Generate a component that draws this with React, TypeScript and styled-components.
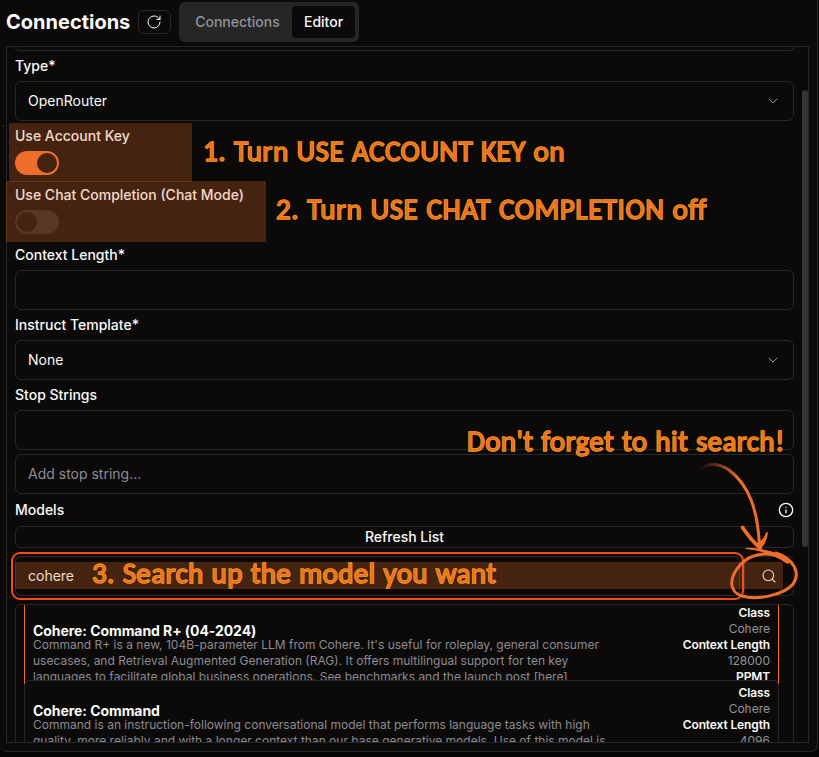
import React from 'react';
import styled, { createGlobalStyle } from 'styled-components';
import { ChevronDown, Info, RotateCw, Search } from 'lucide-react';

const line = '#27272a';
const accent = '#f06e2c';

const GlobalStyle = createGlobalStyle`
  * { box-sizing: border-box; }
  body { margin: 0; background: #040404; overflow: hidden; }
`;

const Page = styled.div`
  position: relative;
  width: 819px;
  height: 757px;
  overflow: hidden;
  background: #050404;
  color: #fafaf9;
  font: 400 14px/20px Inter, sans-serif;
`;

const Shell = styled.main`
  width: 818px;
  height: 752px;
  padding-left: 6px;
  background: #0c0a09;
  border-right: 1px solid ${line};
  border-bottom: 1px solid ${line};
  border-radius: 0 0 7px 7px;
`;

const Header = styled.header`
  display: flex;
  align-items: center;
  height: 46px;
  padding-bottom: 2px;
`;

const Title = styled.h1`
  width: 132px;
  margin: 0;
  font-size: 20px;
  line-height: 28px;
  font-weight: 700;
  white-space: nowrap;
`;

const IconButton = styled.button`
  display: flex;
  align-items: center;
  justify-content: center;
  width: 33px;
  height: 24px;
  padding: 0 1px 0 0;
  color: #fafaf9;
  background: transparent;
  border: 1px solid ${line};
  border-radius: 6px;
`;

const Tabs = styled.nav`
  display: flex;
  width: 180px;
  height: 40px;
  margin-left: 8px;
  padding: 4px;
  background: #262626;
  border-radius: 6px;
`;

const Tab = styled.button<{ $active?: boolean }>`
  width: ${p => (p.$active ? '63px' : '109px')};
  height: 32px;
  padding: 0;
  border: 0;
  border-radius: 4px;
  font: 500 14px/20px Inter, sans-serif;
  color: ${p => (p.$active ? '#fafaf9' : '#93939c')};
  background: ${p => (p.$active ? '#0c0a09' : 'transparent')};
`;

const Panel = styled.section`
  display: flex;
  width: 803px;
  height: 697px;
  border: 1px solid ${line};
  overflow: hidden;
`;

const Form = styled.div`
  width: 787px;
  padding-left: 8px;
`;

const FieldEnd = styled.div`
  height: 4px;
  border: 1px solid ${line};
  border-top: 0;
  border-radius: 0 0 6px 6px;
`;

const Label = styled.div<{ $h?: number }>`
  display: flex;
  align-items: center;
  justify-content: space-between;
  height: ${p => p.$h ?? 30}px;
  font-weight: 500;
`;

const Field = styled.div<{ $muted?: boolean; $gap?: boolean }>`
  display: flex;
  align-items: center;
  justify-content: space-between;
  height: 40px;
  margin-top: ${p => (p.$gap ? 4 : 0)}px;
  padding: 0 12px;
  border: 1px solid ${line};
  border-radius: 6px;
  color: ${p => (p.$muted ? '#8d8d96' : '#fafaf9')};
`;

const SwitchRow = styled.div<{ $h: number }>`
  height: ${p => p.$h}px;
`;

const Switch = styled.div<{ $on?: boolean }>`
  display: flex;
  justify-content: ${p => (p.$on ? 'flex-end' : 'flex-start')};
  width: 44px;
  height: 24px;
  padding: 2px;
  border-radius: 12px;
  background: ${p => (p.$on ? accent : '#292524')};
`;

const Thumb = styled.div`
  width: 20px;
  height: 20px;
  border-radius: 50%;
  background: #0c0a09;
`;

const Refresh = styled.button`
  display: block;
  width: 100%;
  height: 22px;
  padding: 0;
  border: 1px solid ${line};
  border-radius: 6px;
  background: transparent;
  color: #fafaf9;
  font: 500 14px/20px Inter, sans-serif;
`;

const SearchRow = styled.div`
  display: grid;
  grid-template-columns: 725px 50px;
  gap: 4px;
  margin: 8px 0;
`;

const SearchBox = styled.div<{ $center?: boolean }>`
  display: flex;
  align-items: center;
  justify-content: ${p => (p.$center ? 'center' : 'flex-start')};
  height: 40px;
  padding: 0 12px;
  border: 1px solid ${line};
  border-radius: 6px;
`;

const Results = styled.div`
  height: 160px;
  padding: 0 14px 0 8px;
  border: 1px solid ${line};
  border-radius: 6px;
  overflow: hidden;
`;

const Card = styled.article<{ $selected?: boolean }>`
  position: relative;
  display: flex;
  justify-content: space-between;
  height: ${p => (p.$selected ? 79 : 80)}px;
  margin-top: ${p => (p.$selected ? 0 : -4)}px;
  padding: 0 8px;
  overflow: hidden;
  background: #0c0a09;
  border: 1px solid ${p => (p.$selected ? accent : line)};
  border-width: ${p => (p.$selected ? '0 1px' : '1px 1px 0')};
  border-radius: ${p => (p.$selected ? '0' : '6px 6px 0 0')};
  line-height: 16px;
`;

const CardText = styled.div<{ $first?: boolean }>`
  width: 590px;
  padding-top: ${p => (p.$first ? 18 : 22)}px;
`;

const CardTitle = styled.h2`
  margin: 0;
  font-size: 14px;
  line-height: 16px;
  font-weight: 700;
  letter-spacing: -0.07px;
`;

const Description = styled.p`
  margin: -2px 0 0;
  color: #8b8b94;
  font-size: 12px;
  line-height: 16px;
  white-space: nowrap;
`;

const Stats = styled.dl<{ $first?: boolean }>`
  margin: 0;
  padding-top: ${p => (p.$first ? 0 : 4)}px;
  text-align: right;
  font-size: 12px;
  line-height: 16px;
`;

const StatName = styled.dt`
  font-weight: 600;
  letter-spacing: -0.13px;
`;

const StatValue = styled.dd`
  margin: 0;
  color: #93939c;
`;

const ScrollTrack = styled.div`
  width: 14px;
  padding: 43px 0 0 8px;
`;

const ScrollThumb = styled.div`
  width: 6px;
  height: 457px;
  border-radius: 3px;
  background: #363436;
`;

const Highlight = styled.div<{ $x: number; $y: number; $w: number; $h: number }>`
  position: absolute;
  left: ${p => p.$x}px;
  top: ${p => p.$y}px;
  width: ${p => p.$w}px;
  height: ${p => p.$h}px;
  background: rgba(237, 110, 45, 0.25);
`;

const Note = styled.div<{ $x: number; $y: number; $spacing: number }>`
  position: absolute;
  left: ${p => p.$x}px;
  top: ${p => p.$y}px;
  color: ${accent};
  font: 400 29px/36px Carlito, Lato, sans-serif;
  white-space: nowrap;
  letter-spacing: ${p => p.$spacing}px;
  word-spacing: 1px;
  -webkit-text-stroke: 1.5px #ffa305;
  paint-order: stroke fill;
`;

const SearchOutline = styled.div`
  position: absolute;
  left: 11px;
  top: 552px;
  width: 733px;
  height: 48px;
  border: 2px solid #fb4a14;
  border-radius: 9px;
`;

const Sketch = styled.svg`
  position: absolute;
  left: 0;
  top: 0;
  pointer-events: none;
`;

export default function App() {
  return (
    <Page>
      <GlobalStyle />
      <Shell>
        <Header>
          <Title>Connections</Title>
          <IconButton aria-label="Reload"><RotateCw size={16} strokeWidth={1.5} /></IconButton>
          <Tabs>
            <Tab>Connections</Tab>
            <Tab $active>Editor</Tab>
          </Tabs>
        </Header>
        <Panel>
          <Form>
            <FieldEnd />
            <Label>Type*</Label>
            <Field>OpenRouter<ChevronDown size={16} strokeWidth={1.4} color="#a8a29e" /></Field>
            <Label>Use Account Key</Label>
            <SwitchRow $h={29}><Switch $on><Thumb /></Switch></SwitchRow>
            <Label>Use Chat Completion (Chat Mode)</Label>
            <SwitchRow $h={30}><Switch><Thumb /></Switch></SwitchRow>
            <Label>Context Length*</Label>
            <Field />
            <Label>Instruct Template*</Label>
            <Field>None<ChevronDown size={16} strokeWidth={1.4} color="#a8a29e" /></Field>
            <Label>Stop Strings</Label>
            <Field />
            <Field $muted $gap>Add stop string...</Field>
            <Label $h={32}>Models<Info size={16} strokeWidth={2} /></Label>
            <Refresh>Refresh List</Refresh>
            <SearchRow>
              <SearchBox>cohere</SearchBox>
              <SearchBox $center><Search size={16} strokeWidth={1.6} /></SearchBox>
            </SearchRow>
            <Results>
              <Card $selected>
                <CardText $first>
                  <CardTitle>Cohere: Command R+ (04-2024)</CardTitle>
                  <Description>
                    Command R+ is a new, 104B-parameter LLM from Cohere. It's useful for roleplay, general consumer<br />
                    usecases, and Retrieval Augmented Generation (RAG). It offers multilingual support for ten key<br />
                    languages to facilitate global business operations. See benchmarks and the launch post [here]
                  </Description>
                </CardText>
                <Stats $first>
                  <StatName>Class</StatName><StatValue>Cohere</StatValue>
                  <StatName>Context Length</StatName><StatValue>128000</StatValue>
                  <StatName>PPMT</StatName>
                </Stats>
              </Card>
              <Card>
                <CardText>
                  <CardTitle>Cohere: Command</CardTitle>
                  <Description>
                    Command is an instruction-following conversational model that performs language tasks with high<br />
                    quality, more reliably and with a longer context than our base generative models. Use of this model is
                  </Description>
                </CardText>
                <Stats>
                  <StatName>Class</StatName><StatValue>Cohere</StatValue>
                  <StatName>Context Length</StatName><StatValue>4096</StatValue>
                </Stats>
              </Card>
            </Results>
          </Form>
          <ScrollTrack><ScrollThumb /></ScrollTrack>
        </Panel>
      </Shell>

      <Highlight $x={9} $y={123} $w={183} $h={59} />
      <Highlight $x={6} $y={181} $w={260} $h={61} />
      <Highlight $x={15} $y={562} $w={768} $h={27} />
      <SearchOutline />
      <Note $x={203} $y={133} $spacing={0.44}>1. Turn USE ACCOUNT KEY on</Note>
      <Note $x={276} $y={191} $spacing={0.56}>2. Turn USE CHAT COMPLETION off</Note>
      <Note $x={467} $y={423} $spacing={0.36}>Don't forget to hit search!</Note>
      <Note $x={92} $y={555} $spacing={0.36}>3. Search up the model you want</Note>
      <Sketch width="819" height="757" viewBox="0 0 819 757" fill="none" stroke={accent} strokeLinecap="round" strokeLinejoin="round">
        <defs>
          <linearGradient id="tail" gradientUnits="userSpaceOnUse" x1="699" y1="472" x2="738" y2="480">
            <stop offset="0" stopColor={accent} stopOpacity="0" />
            <stop offset="1" stopColor={accent} />
          </linearGradient>
        </defs>
        <path d="M2.5 125.5L3.5 126.5" stroke="#7a2f18" strokeWidth="1" />
        <path d="M694 473C703 464 716 461 729 470C749 485 758 510 759.5 547" stroke="url(#tail)" strokeWidth="3" />
        <path d="M742.5 527.5C747 534 753 542 760 548" strokeWidth="3.8" />
        <path d="M767 533C766 539 764 545 759 549L757 544C762 542 765 538 767 533Z" fill={accent} strokeWidth="1.8" />
        <path d="M746 548.5C762 548 779 553 791 562L787 563C777 556 762 550 746 548.5Z" fill={accent} strokeWidth="1.2" />
        <path d="M788 562C774 550 753 552 741 564C728 578 729 592 742 596C758 601 785 594 793 584C801 573 794 559 776 553" strokeWidth="3" />
      </Sketch>
    </Page>
  );
}
